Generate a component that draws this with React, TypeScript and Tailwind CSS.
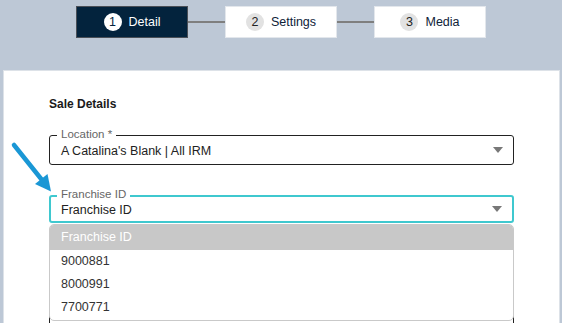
import React from "react";

function Caret() {
  return (
    <svg width="10" height="6" viewBox="0 0 10 6" className="shrink-0">
      <path d="M0 0 L10 0 L5 6 Z" fill="#787878" />
    </svg>
  );
}

function Step({ n, label, active }: { n: number; label: string; active?: boolean }) {
  return (
    <div
      className={
        active
          ? "flex h-[32px] w-[112px] items-center justify-center gap-[7px] border border-[#4a4f57] bg-[#03233d]"
          : "flex h-[32px] w-[112px] items-center justify-center gap-[7px] border border-[#e3e7ec] bg-white"
      }
    >
      <span
        className={
          active
            ? "flex h-[18px] w-[18px] items-center justify-center rounded-full bg-white text-[12.5px] leading-none text-[#03233d]"
            : "flex h-[18px] w-[18px] items-center justify-center rounded-full bg-[#e2e2e2] text-[12.5px] leading-none text-[#222]"
        }
      >
        {n}
      </span>
      <span className={active ? "text-[12.5px] text-white" : "text-[12.5px] text-[#0e2238]"}>{label}</span>
    </div>
  );
}

function Connector() {
  return <div className="h-[2px] w-[37px] bg-[#7f7f7f]" />;
}

export default function App() {
  return (
    <div className="relative h-[323px] w-[562px] overflow-hidden bg-[#bdc8d6] font-['Liberation_Sans',Arial,sans-serif]">
      <div className="flex items-center justify-center pt-[6px]">
        <Step n={1} label="Detail" active />
        <Connector />
        <Step n={2} label="Settings" />
        <Connector />
        <Step n={3} label="Media" />
      </div>

      <div className="ml-[3px] mt-[32px] h-[320px] w-[557px] border border-[#dde2e8] bg-white pl-[45px] pr-[45px] pt-[26px]">
        <div className="text-[12px] font-bold leading-[14px] text-[#1a1a1a]">Sale Details</div>

        <div className="relative mt-[24px] flex h-[30px] items-center justify-between rounded-[3px] border border-[#222] pl-[11px] pr-[10px]">
          <span className="absolute left-[7px] top-[-9px] bg-white px-[4px] text-[11.5px] leading-[14px] text-[#666]">
            Location *
          </span>
          <span className="pt-[2px] text-[12.5px] text-[#222]">A Catalina's Blank | All IRM</span>
          <Caret />
        </div>

        <div className="relative mt-[30px]">
          <div className="relative flex h-[28px] items-center justify-between rounded-[3px] border-2 border-[#3fc8cf] pl-[10px] pr-[10px]">
            <span className="absolute left-[6px] top-[-10px] bg-white px-[4px] text-[11.5px] leading-[14px] text-[#666]">
              Franchise ID
            </span>
            <span className="pt-[3px] text-[12.5px] text-[#222]">Franchise ID</span>
            <Caret />
          </div>

          <div className="absolute left-0 right-0 top-[29px] z-10 overflow-hidden rounded-[5px] border border-[#c9c9c9] bg-white pb-[1px]">
            <div className="flex h-[25px] items-center bg-[#c8c8c8] pl-[11px] text-[12.5px] text-white">
              Franchise ID
            </div>
            <div className="flex h-[23px] items-center pl-[11px] text-[12.5px] text-[#333]">9000881</div>
            <div className="flex h-[23px] items-center pl-[11px] text-[12.5px] text-[#333]">8000991</div>
            <div className="flex h-[23px] items-center pl-[11px] text-[12.5px] text-[#333]">7700771</div>
          </div>

          <div className="mt-[22px] h-[100px] rounded-[3px] border border-[#222] pl-[12px] pt-[74px] text-[12.5px] text-[#222]">
            uild Omnall
          </div>
        </div>
      </div>

      <svg className="absolute left-0 top-0" width="562" height="323" viewBox="0 0 562 323">
        <line x1="14" y1="145" x2="42" y2="180" stroke="#1a97d5" strokeWidth="4.5" strokeLinecap="round" />
        <path d="M51 191.5 L35 184 L47.5 174 Z" fill="#1a97d5" />
      </svg>
    </div>
  );
}
